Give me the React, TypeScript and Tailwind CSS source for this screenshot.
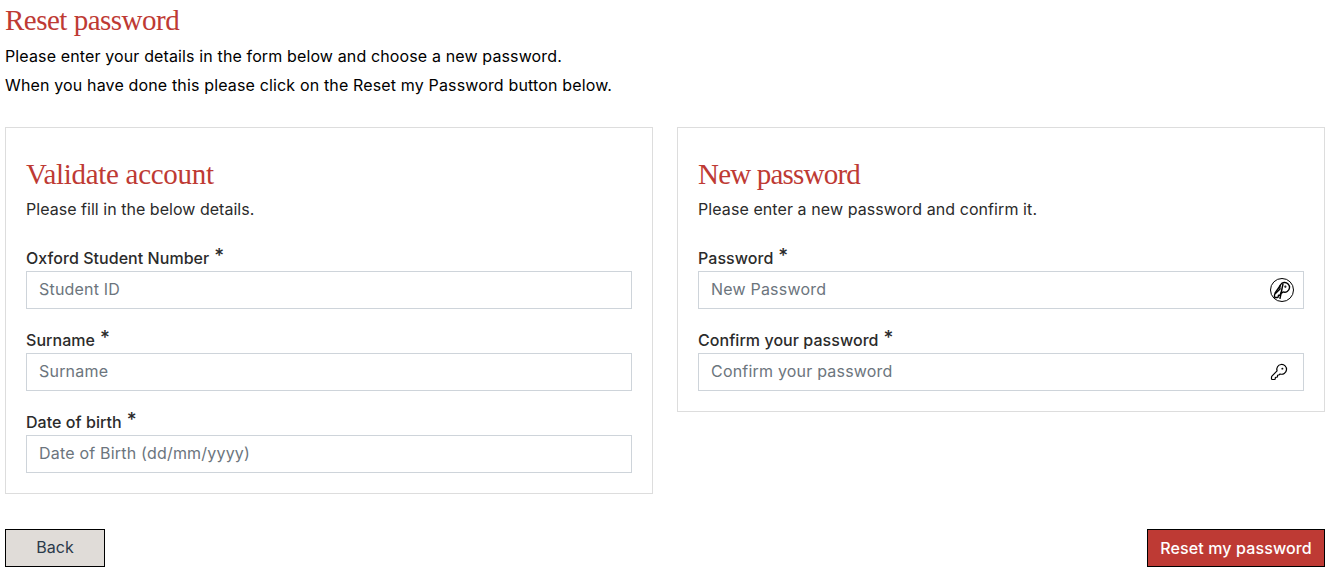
import { KeyRound } from 'lucide-react';

const sans = "font-['Inter',sans-serif]";
const heading = "font-['Liberation_Serif',serif] text-[29px] text-[#be3a34]";

const Field = ({
  label,
  placeholder,
  icon,
  className = '',
}: {
  label: string;
  placeholder: string;
  icon?: React.ReactNode;
  className?: string;
}) => (
  <div className={className}>
    <label className="flex h-[23px] items-center pb-[2px] text-[16px] font-medium tracking-[0.05px] text-[#2b2b2b]">
      {label}
      <span className="relative -top-[2px] ml-[5px] text-[19px] leading-none">*</span>
    </label>
    <div className="relative mt-[1px] flex h-[38px] items-center border border-[#ced4da] bg-white px-[12px] pb-[2px]">
      <span className="text-[16px] tracking-[0.2px] text-[#6c757d]">{placeholder}</span>
      {icon}
    </div>
  </div>
);

const CircledKey = () => (
  <span className="absolute right-[9px] top-[6px] flex h-[24px] w-[24px] items-center justify-center rounded-full border-[1.5px] border-black">
    <KeyRound className="h-[18px] w-[18px] text-black" strokeWidth={1.8} />
    <svg className="absolute inset-0" viewBox="0 0 21 21" fill="none" stroke="black" strokeWidth="1.4">
      <path d="M11.5 4.5 L8.5 19" />
      <path d="M9 6 L3.5 14" />
    </svg>
  </span>
);

export default function App() {
  return (
    <div className={`${sans} min-h-[582px] bg-white pl-[5px] pr-[11px] text-black`}>
      <h1 className={`${heading} pt-[3px] leading-[34px] tracking-[-0.5px]`}>Reset password</h1>
      <p className="mt-[5px] text-[16px] leading-[29px] tracking-[0.13px]">Please enter your details in the form below and choose a new password.</p>
      <p className="text-[16px] leading-[29px] tracking-[0.15px]">When you have done this please click on the Reset my Password button below.</p>

      <div className="mt-[27px] grid grid-cols-2 items-start gap-[24px]">
        <section className="border border-[#dddddd] px-[20px] pb-[20px] pt-[28px]">
          <h2 className={`${heading} leading-[36px] tracking-[-0.3px]`}>Validate account</h2>
          <p className="mt-[5px] text-[16px] leading-[24px] tracking-[0.03px] text-[#2b2b2b]">Please fill in the below details.</p>
          <Field className="mt-[26px]" label="Oxford Student Number" placeholder="Student ID" />
          <Field className="mt-[20px]" label="Surname" placeholder="Surname" />
          <Field className="mt-[20px]" label="Date of birth" placeholder="Date of Birth (dd/mm/yyyy)" />
        </section>

        <section className="border border-[#dddddd] px-[20px] pb-[20px] pt-[28px]">
          <h2 className={`${heading} leading-[36px] tracking-[-0.8px]`}>New password</h2>
          <p className="mt-[5px] text-[16px] leading-[24px] tracking-[0.08px] text-[#2b2b2b]">Please enter a new password and confirm it.</p>
          <Field className="mt-[26px]" label="Password" placeholder="New Password" icon={<CircledKey />} />
          <Field
            className="mt-[20px]"
            label="Confirm your password"
            placeholder="Confirm your password"
            icon={<KeyRound className="absolute right-[15px] top-[9px] h-[18px] w-[18px] text-black" strokeWidth={1.6} />}
          />
        </section>
      </div>

      <div className="mt-[35px] flex justify-between">
        <button className="h-[38px] w-[100px] border border-black bg-[#e0dcd8] pb-[2px] text-[16px] text-[#2b3a4a]">Back</button>
        <button className="h-[38px] w-[178px] border border-black bg-[#be3a34] text-[16px] font-medium tracking-[0.13px] text-white">Reset my password</button>
      </div>
    </div>
  );
}
